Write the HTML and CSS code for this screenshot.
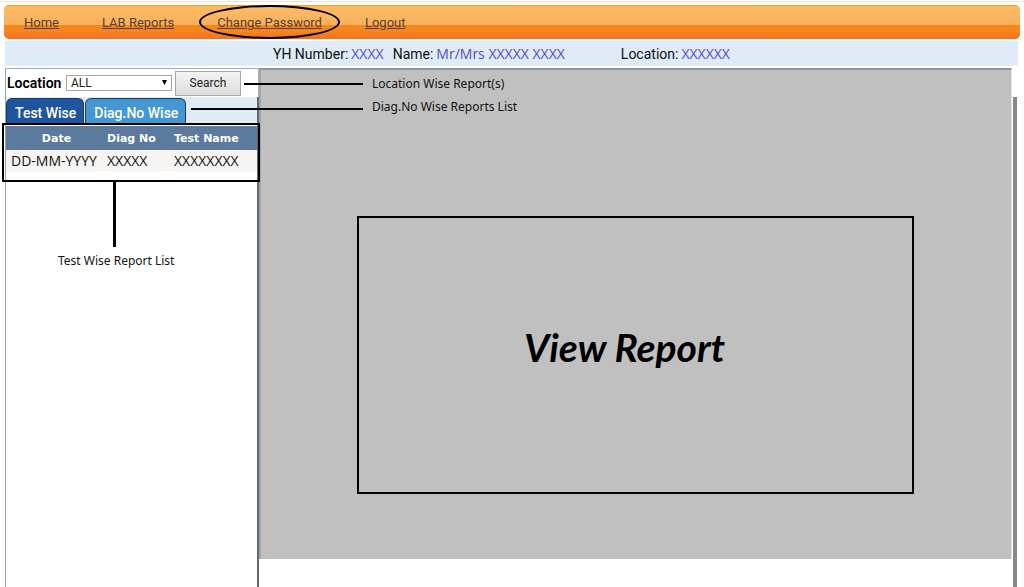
FILE: index.html
```html
<!DOCTYPE html>
<html lang="en">
<head>
<meta charset="utf-8">
<meta name="viewport" content="width=device-width, initial-scale=1">
<title>LAB Reports</title>
<link rel="stylesheet" href="styles.css">
</head>
<body>
<nav class="nav">
  <a href="#">Home</a>
  <a href="#">LAB Reports</a>
  <a href="#" class="circled">Change Password</a>
  <a href="#">Logout</a>
</nav>
<header class="patient">
  <div class="field"><span>YH Number:</span><span class="value">XXXX</span></div>
  <div class="field name"><span>Name:</span><span class="value">Mr/Mrs XXXXX XXXX</span></div>
  <div class="field"><span>Location:</span><span class="value">XXXXXX</span></div>
</header>
<main class="workspace">
  <aside class="sidebar">
    <form class="search">
      <label for="location">Location</label>
      <span class="picker">
        <select id="location"><option>ALL</option></select>
        <svg class="arrow" viewBox="0 0 6 6" aria-hidden="true"><path d="M0 0H6L3 6Z"/></svg>
      </span>
      <button type="button" class="go">Search</button>
    </form>
    <div class="lists">
      <div class="tabs">
        <button type="button" class="tab active">Test Wise</button>
        <button type="button" class="tab">Diag.No Wise</button>
      </div>
      <div class="results">
        <table class="tests">
          <thead><tr><th class="date">Date</th><th class="diag">Diag No</th><th>Test Name</th></tr></thead>
          <tbody><tr><td>DD-MM-YYYY</td><td>XXXXX</td><td>XXXXXXXX</td></tr></tbody>
        </table>
      </div>
      <p class="list-note">Test Wise Report List</p>
    </div>
  </aside>
  <section class="viewer">
    <p class="note">Location Wise Report(s)</p>
    <p class="note tab-note">Diag.No Wise Reports List</p>
    <div class="report"><h1>View Report</h1></div>
  </section>
  <div class="rail"></div>
</main>
</body>
</html>
```

FILE: styles.css
```css
* { box-sizing: border-box; }

body {
  margin: 0;
  min-height: 100vh;
  display: flex;
  flex-direction: column;
  padding: 5px 4px 0;
  background: linear-gradient(#fff 1px, #e4e4e4 1px, #e4e4e4 2px, #fff 2px);
  color: #111;
  font-family: Roboto, "Liberation Sans", sans-serif;
}

p, h1 { margin: 0; }

.nav {
  display: flex;
  align-items: center;
  gap: 43px;
  height: 34px;
  padding: 0 20px;
  border-top: 1px solid #f9a11b;
  border-radius: 5px;
  background: linear-gradient(#fdbb63, #f9b160 57%, #f5871c 58%, #f6871c 75%, #f56f22);
  font-size: 13px;
}

.nav a { color: #57402a; position: relative; }

.circled::after {
  content: "";
  position: absolute;
  inset: -10px -18px -9px;
  border: 2px solid #000;
  border-radius: 50%;
}

.patient {
  display: flex;
  align-items: center;
  height: 25px;
  margin: 2px 2px 2px 1px;
  padding-left: 268px;
  background: #dfecf8;
  font-size: 14px;
}

.field { display: flex; gap: 3px; margin-right: 9px; align-items: center; }
.name { margin-right: 56px; }
.value { color: #4a4fd0; font-family: "Open Sans", sans-serif; }

.workspace { flex: 1; display: flex; margin: 0 2px 0 1px; }

.sidebar {
  width: 254px;
  flex: none;
  display: flex;
  flex-direction: column;
  border-top: 1px solid #a5adb5;
  border-left: 1px solid #9aa2ab;
}

.search {
  display: flex;
  align-items: center;
  height: 28px;
  padding-left: 1px;
  border-right: 1px solid #a5b5c0;
}

.search label { width: 59px; font-size: 14px; font-weight: 600; color: #000; }
.picker { position: relative; display: flex; width: 106px; margin-right: 3px; }
.picker select {
  appearance: none;
  width: 100%;
  height: 16px;
  padding: 0 4px;
  border: 1px solid #a9a9a9;
  border-radius: 0;
  background: #fff;
  color: #222;
  font: 12px/14px Roboto, sans-serif;
}
.arrow { position: absolute; right: 5px; top: 5px; width: 5px; height: 5px; }

.go {
  width: 66px;
  height: 25px;
  padding: 0;
  border: 1px solid #a8a8a8;
  background: linear-gradient(#f4f4f4, #dddddd);
  color: #222;
  font: 12px Roboto, sans-serif;
}

.lists { flex: 1; border-right: 2px solid #606870; }

.tabs { display: flex; gap: 1px; height: 28px; padding-top: 1px; background: #dfecf8; }
.tab {
  padding: 2px 7px 0 8px;
  border: 1px solid #1d3c63;
  border-bottom: 0;
  border-radius: 6px 6px 0 0;
  background: #4497d3;
  color: #fff;
  font: 500 14px Roboto, sans-serif;
}
.tab.active { background: #1f559f; }

.results { position: relative; height: 57px; padding-top: 1px; }
.results::before {
  content: "";
  position: absolute;
  inset: -2px -3px 0 -4px;
  border: 2px solid #000;
}
.results::after {
  content: "";
  position: absolute;
  left: 107px;
  top: 57px;
  width: 3px;
  height: 65px;
  background: #000;
}

.tests { width: 100%; border-collapse: collapse; table-layout: fixed; }
.tests th {
  height: 24px;
  padding: 0;
  background: #5b7a9d;
  color: #fff;
  font: bold 11px "DejaVu Sans", sans-serif;
  text-align: left;
}
.tests .date { width: 101px; text-align: center; }
.tests .diag { width: 67px; }
.tests td {
  height: 22px;
  padding: 0;
  background: #f6f5f3;
  font: 14px/20px "Open Sans", sans-serif;
}
.tests td:first-child { padding-left: 5px; }

.list-note, .note { font: 12px/22px "Noto Sans", sans-serif; }
.list-note { padding: 68px 0 0 52px; }

.viewer {
  flex: 1;
  display: flex;
  flex-direction: column;
  margin-bottom: 28px;
  padding: 2px 97px 65px 96px;
  border-top: 2px solid #92969a;
  border-left: 2px solid #a2a5a7;
  border-right: 1px solid #e3e3e3;
  background: #c0c0c0;
}

.note { position: relative; margin-left: 15px; line-height: 23px; }
.note::before {
  content: "";
  position: absolute;
  right: 100%;
  top: 11px;
  width: 119px;
  height: 2px;
  margin-right: 9px;
  background: #000;
}
.tab-note::before { width: 172px; top: 13px; }

.report {
  flex: 1;
  display: flex;
  align-items: center;
  justify-content: center;
  margin-top: 98px;
  padding: 0 22px 16px 0;
  border: 2px solid #000;
}
.report h1 { color: #000; font: italic bold 39px Lato, sans-serif; }

.rail { width: 4px; margin: 29px 1px 0; background: #858a8d; }
```
